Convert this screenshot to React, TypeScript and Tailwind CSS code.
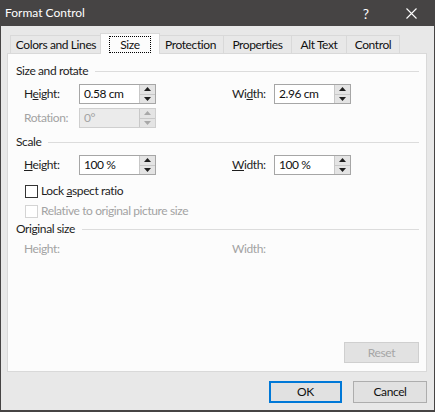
import React from "react";

const font = { fontFamily: 'Lato, "Noto Sans", "Liberation Sans", sans-serif' };

function Spinner({ disabled }: { disabled?: boolean }) {
  const c = disabled ? "#a8a8a8" : "#1e1e1e";
  return (
    <div className="flex flex-col w-[16px] h-full border-l border-[#c8c8c8]">
      <div className="flex-1 flex items-center justify-center bg-[#e4e4e4] border-b border-[#c8c8c8]">
        <svg width="7" height="4" viewBox="0 0 7 4">
          <path d="M3.5 0 L7 4 L0 4 Z" fill={c} />
        </svg>
      </div>
      <div className="flex-1 flex items-center justify-center bg-[#e4e4e4]">
        <svg width="7" height="4" viewBox="0 0 7 4">
          <path d="M0 0 L7 0 L3.5 4 Z" fill={c} />
        </svg>
      </div>
    </div>
  );
}

function SpinBox({ value, disabled }: { value: string; disabled?: boolean }) {
  return (
    <div
      className={`flex h-[20px] w-[77px] border ${
        disabled ? "border-[#cfcfcf] bg-[#ebebeb] text-[#a3a3a3]" : "border-[#a6a6a6] bg-white text-[#111]"
      }`}
    >
      <div className="flex-1 flex items-center pl-[4px]">{value}</div>
      <Spinner disabled={disabled} />
    </div>
  );
}

function Header({ title }: { title: string }) {
  return (
    <div className="flex items-center h-[14px] pl-[8px] pr-[7px] gap-[7px]">
      <span className="text-[#1e1e1e] leading-none whitespace-nowrap">{title}</span>
      <div className="flex-1 h-px bg-[#dcdcdc]" />
    </div>
  );
}

function Label({ children, disabled, w }: { children: React.ReactNode; disabled?: boolean; w: string }) {
  return (
    <span className={`${w} whitespace-nowrap ${disabled ? "text-[#a3a3a3]" : "text-[#1e1e1e]"}`}>
      {children}
    </span>
  );
}

function Tab({ label, w, active }: { label: string; w: string; active?: boolean }) {
  if (active) {
    return (
      <div
        className={`${w} h-[21px] -mb-px -mx-[2px] relative z-10 bg-[#fcfcfc] border-x border-t border-[#d9d9d9] flex items-center justify-center`}
      >
        <span className="px-[10px] border border-dotted border-black leading-[15px] text-[#111]">{label}</span>
      </div>
    );
  }
  return (
    <div
      className={`${w} h-[18px] border-t border-r first:border-l border-[#d9d9d9] flex items-center justify-center text-[#111] whitespace-nowrap`}
    >
      {label}
    </div>
  );
}

function Check({ label, disabled }: { label: React.ReactNode; disabled?: boolean }) {
  return (
    <div className="flex items-center h-[14px] pl-[17px] gap-[3px]">
      <div className={`w-[13px] h-[13px] border ${disabled ? "border-[#d4d4d4]" : "border-[#333]"} bg-white`} />
      <span className={`whitespace-nowrap ${disabled ? "text-[#a3a3a3]" : "text-[#1e1e1e]"}`}>{label}</span>
    </div>
  );
}

export default function App() {
  return (
    <div
      style={font}
      className="w-[435px] h-[412px] flex flex-col bg-[#464444] select-none text-[12px] tracking-[-0.4px]"
    >
      <div className="h-[26px] flex items-center text-white tracking-normal">
        <span className="pl-[5px] flex-1">Format Control</span>
        <span className="w-[20px] text-[14px] text-center mr-[30px]">?</span>
        <svg width="11" height="11" viewBox="0 0 11 11" className="mr-[18px]">
          <path d="M0.5 0.5 L10.5 10.5 M10.5 0.5 L0.5 10.5" stroke="white" strokeWidth="1.1" />
        </svg>
      </div>
      <div className="flex-1 mx-[1px] mb-[2px] bg-[#e8e8e8] flex flex-col pl-[6px] pr-[7px]">
        <div className="flex items-end pt-[7px] pl-[3px]">
          <Tab label="Colors and Lines" w="w-[92px]" />
          <Tab label="Size" w="w-[60px]" active />
          <Tab label="Protection" w="w-[66px]" />
          <Tab label="Properties" w="w-[68px]" />
          <Tab label="Alt Text" w="w-[55px]" />
          <Tab label="Control" w="w-[53px]" />
        </div>
        <div className="h-[319px] border border-[#d9d9d9] bg-[#fcfcfc] flex flex-col pt-[10px]">
          <Header title="Size and rotate" />
          <div className="flex items-center mt-[6px] pl-[16px]">
            <Label w="w-[55px]">
              H<u>e</u>ight:
            </Label>
            <SpinBox value="0.58 cm" />
            <div className="w-[76px]" />
            <Label w="w-[42px]">
              Wi<u>d</u>th:
            </Label>
            <SpinBox value="2.96 cm" />
          </div>
          <div className="flex items-center mt-[4px] pl-[16px]">
            <Label w="w-[55px]" disabled>
              Rotation:
            </Label>
            <SpinBox value="0°" disabled />
          </div>
          <div className="mt-[7px]">
            <Header title="Scale" />
          </div>
          <div className="flex items-center mt-[6px] pl-[16px]">
            <Label w="w-[55px]">
              <u>H</u>eight:
            </Label>
            <SpinBox value="100 %" />
            <div className="w-[76px]" />
            <Label w="w-[42px]">
              <u>W</u>idth:
            </Label>
            <SpinBox value="100 %" />
          </div>
          <div className="mt-[9px]">
            <Check
              label={
                <>
                  Lock <u>a</u>spect ratio
                </>
              }
            />
          </div>
          <div className="mt-[6px]">
            <Check label="Relative to original picture size" disabled />
          </div>
          <div className="mt-[4px]">
            <Header title="Original size" />
          </div>
          <div className="flex items-center h-[14px] mt-[6px] pl-[16px]">
            <Label w="w-[208px]" disabled>
              Height:
            </Label>
            <Label w="w-[42px]" disabled>
              Width:
            </Label>
          </div>
          <div className="flex-1" />
          <div className="flex justify-end pr-[7px] pb-[8px]">
            <div className="w-[75px] h-[21px] border border-[#cfcfcf] bg-[#e2e2e2] flex items-center justify-center text-[#a6a6a6]">
              Reset
            </div>
          </div>
        </div>
        <div className="flex justify-end gap-[11px] mt-[9px]">
          <div className="w-[73px] h-[22px] border-2 border-[#0078d7] bg-[#e1e1e1] flex items-center justify-center text-[#111]">
            OK
          </div>
          <div className="w-[74px] h-[22px] border border-[#adadad] bg-[#e1e1e1] flex items-center justify-center text-[#111]">
            Cancel
          </div>
        </div>
      </div>
    </div>
  );
}
